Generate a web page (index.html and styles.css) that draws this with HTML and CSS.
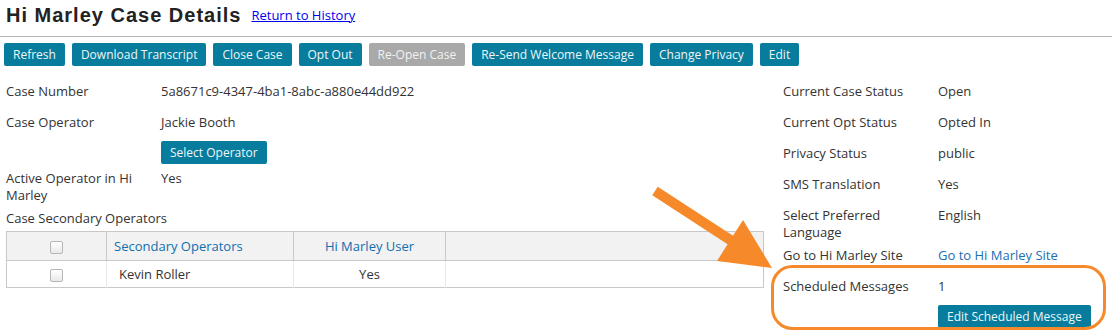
FILE: index.html
```html
<!DOCTYPE html>
<html>
<head>
<meta charset="utf-8">
<title>Hi Marley Case Details</title>
<link rel="stylesheet" href="styles.css">
</head>
<body>
<div class="page">
  <div class="header">
    <h1 class="title">Hi Marley Case Details</h1>
    <a href="#" class="back">Return to History</a>
  </div>
  <div class="rule"></div>
  <div class="toolbar">
    <button class="btn">Refresh</button>
    <button class="btn">Download Transcript</button>
    <button class="btn">Close Case</button>
    <button class="btn">Opt Out</button>
    <button class="btn btn-disabled">Re-Open Case</button>
    <button class="btn">Re-Send Welcome Message</button>
    <button class="btn">Change Privacy</button>
    <button class="btn">Edit</button>
  </div>
  <div class="content">
    <div class="col-left">
      <div class="row"><div class="label">Case Number</div><div class="value">5a8671c9-4347-4ba1-8abc-a880e44dd922</div></div>
      <div class="row"><div class="label">Case Operator</div><div class="value">Jackie Booth<div><button class="btn btn-inline">Select Operator</button></div></div></div>
      <div class="row"><div class="label">Active Operator in Hi Marley</div><div class="value">Yes</div></div>
      <div class="sec-label">Case Secondary Operators</div>
      <table class="ops">
        <thead>
          <tr>
            <th class="c-check"><span class="checkbox"></span></th>
            <th class="c-name">Secondary Operators</th>
            <th class="c-user">Hi Marley User</th>
            <th class="c-rest"></th>
          </tr>
        </thead>
        <tbody>
          <tr>
            <td class="c-check"><span class="checkbox"></span></td>
            <td class="c-name">Kevin Roller</td>
            <td class="c-user">Yes</td>
            <td class="c-rest"></td>
          </tr>
        </tbody>
      </table>
    </div>
    <div class="col-right">
      <div class="row"><div class="label">Current Case Status</div><div class="value">Open</div></div>
      <div class="row"><div class="label">Current Opt Status</div><div class="value">Opted In</div></div>
      <div class="row"><div class="label">Privacy Status</div><div class="value">public</div></div>
      <div class="row"><div class="label">SMS Translation</div><div class="value">Yes</div></div>
      <div class="row"><div class="label">Select Preferred Language</div><div class="value">English</div></div>
      <div class="row"><div class="label">Go to Hi Marley Site</div><div class="value"><a href="#" class="site-link">Go to Hi Marley Site</a></div></div>
      <div class="row"><div class="label">Scheduled Messages</div><div class="value">1<div><button class="btn btn-inline">Edit Scheduled Message</button></div></div></div>
    </div>
  </div>
  <svg class="annot" width="1112" height="332" viewBox="0 0 1112 332">
    <line x1="655" y1="191" x2="738" y2="245" stroke="#f68a2a" stroke-width="10"/>
    <polygon points="743,220 717,261 772,268" fill="#f68a2a"/>
    <rect x="772.5" y="266.5" width="332" height="62" rx="20" ry="20" fill="none" stroke="#f68a2a" stroke-width="3"/>
  </svg>
</div>
</body>
</html>
```

FILE: styles.css
```css
* { box-sizing: border-box; }
html, body { margin: 0; padding: 0; background: #fff; }
body {
  font-family: "Open Sans", "Liberation Sans", sans-serif;
  font-size: 13px;
  line-height: 17px;
  color: #333;
}
.page {
  position: relative;
  width: 1112px;
  height: 332px;
  overflow: hidden;
}
.header {
  display: flex;
  align-items: center;
  gap: 10px;
  padding: 3px 0 0 6px;
  height: 27px;
}
.title {
  margin: 0;
  font-family: "Liberation Sans", Arial, sans-serif;
  font-weight: bold;
  font-size: 20px;
  line-height: 24px;
  letter-spacing: 1px;
  color: #222;
}
.back {
  color: #0000ee;
  text-decoration: underline;
  font-size: 13px;
}
.rule {
  margin-top: 9px;
  height: 1px;
  background: #b4b4b4;
}
.toolbar {
  display: flex;
  gap: 7px;
  padding: 6px 0 0 4px;
}
.btn {
  font-family: "Open Sans", "Liberation Sans", sans-serif;
  font-size: 12px;
  line-height: 23px;
  height: 23px;
  padding: 0 9px;
  border: none;
  border-radius: 2px;
  background: #077c9d;
  color: #eef6f8;
  white-space: nowrap;
}
.btn-disabled {
  background: #a9a9a9;
  color: #f2f2f2;
}
.btn-inline {
  margin-top: 10px;
}
.content {
  display: flex;
  gap: 19px;
  padding: 17px 0 0 6px;
}
.col-left { width: 758px; }
.col-right { flex: 1; }
.row {
  display: grid;
  grid-template-columns: 145px 1fr;
  column-gap: 10px;
  min-height: 25px;
  margin-bottom: 6px;
}
.site-link {
  color: #1a6fb3;
  text-decoration: none;
}
.sec-label {
  margin-bottom: 4px;
}
.ops {
  width: 758px;
  border-collapse: collapse;
  border: 1px solid #c8c8c8;
}
.ops th {
  height: 29px;
  background: #f2f2f2;
  font-weight: normal;
  color: #0f6fb0;
  border-right: 1px solid #c8c8c8;
  border-bottom: 1px solid #c8c8c8;
  padding: 0;
  vertical-align: middle;
}
.ops td {
  height: 27px;
  border-right: 1px solid #e8e8e8;
  padding: 0;
  vertical-align: middle;
}
.ops .c-rest { border-right: none; }
.c-check { width: 100px; text-align: center; }
.c-name { width: 187px; text-align: left; }
th.c-name { padding-left: 7px; }
td.c-name { padding-left: 12px; }
.c-user { width: 152px; text-align: center; }
.checkbox {
  display: inline-block;
  width: 13px;
  height: 13px;
  border: 1px solid #b5b5b5;
  border-radius: 2px;
  background: linear-gradient(#ffffff, #e9e9e9);
  vertical-align: middle;
}
.annot {
  position: absolute;
  left: 0;
  top: 0;
  pointer-events: none;
}
```
